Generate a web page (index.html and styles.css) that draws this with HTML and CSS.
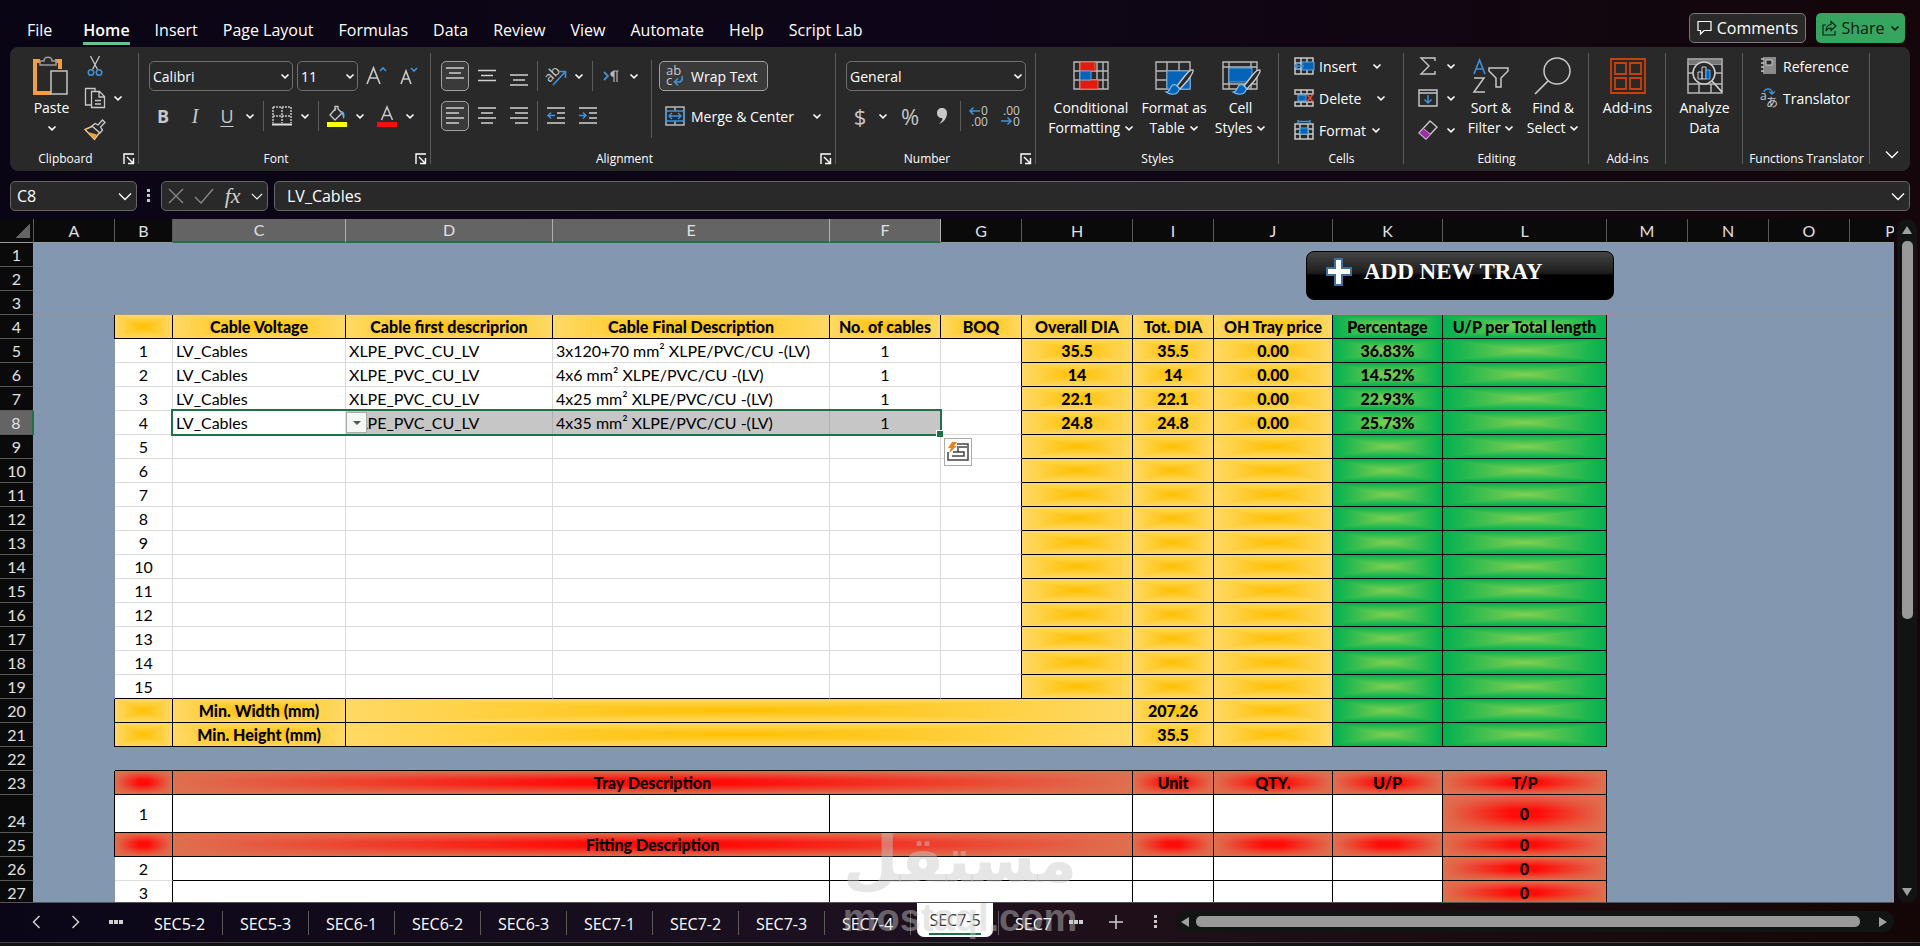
FILE: index.html
```html
<!DOCTYPE html>
<html lang="en">
<head>
  <meta charset="UTF-8">
  <meta name="viewport" content="width=device-width, initial-scale=1.0">
  <title>Cable Tray Sizing - SEC7-5</title>
  <link rel="stylesheet" href="styles.css">
</head>
<body>
  <!-- shared icons -->
  <svg class="sprite" aria-hidden="true">
    <symbol id="chev" viewBox="0 0 10 10"><path d="M1.5 3.5L5 6.8l3.5-3.3" fill="none" stroke="currentColor" stroke-width="1.6"/></symbol>
    <symbol id="chev-lg" viewBox="0 0 14 14"><path d="M1 4.5l6 6 6-6" fill="none" stroke="currentColor" stroke-width="1.3"/></symbol>
    <symbol id="launch" viewBox="0 0 12 12"><path d="M1 11V1h10M4 4l6 6M10.5 5v5.5H5" fill="none" stroke="currentColor" stroke-width="1.4"/></symbol>
    <symbol id="brush" viewBox="0 0 30 26"><path d="M29 1c-2-1-6 3-9 7l-7 9 3 3 8-9c3-4 6-8 5-10z" fill="#292929" stroke="#d0d0d0" stroke-width="1.3"/><path d="M12 16c-3-1-5 1-6 4-1 2-2 3-4 3 4 3 10 3 12 0 1-2 2-3 1-4z" fill="#0563b8" stroke="#7cc0f0" stroke-width="1.2"/></symbol>
  </svg>

  <header class="menu-bar">
    <nav class="menu">
      <a href="#" class="file">File</a>
      <a href="#" class="active">Home</a>
      <a href="#">Insert</a>
      <a href="#">Page Layout</a>
      <a href="#">Formulas</a>
      <a href="#">Data</a>
      <a href="#">Review</a>
      <a href="#">View</a>
      <a href="#">Automate</a>
      <a href="#">Help</a>
      <a href="#">Script Lab</a>
    </nav>
    <button type="button" class="btn-comments">
      <svg width="15" height="16" viewBox="0 0 15 16"><path d="M1 1.5h13v9H7l-3.5 3.5v-3.500H1z" fill="none" stroke="#fff" stroke-width="1.2"/></svg>
      Comments
    </button>
    <button type="button" class="btn-share">
      <svg width="15" height="16" viewBox="0 0 15 16"><path d="M4 5H1v10h12v-4M9 1.500l5 4.500-5 4.500V8C7 8 5 9 4 11c0-4 2-6.500 5-6.500z" fill="none" stroke="#06200f" stroke-width="1.1"/></svg>
      Share
      <svg width="10" height="10"><use href="#chev"/></svg>
    </button>
  </header>

  <section class="ribbon">
    <div class="group clipboard">
      <div class="group-body">
        <button type="button" class="big">
          <span class="pic"><svg width="36" height="40" viewBox="0 0 36 40"><path d="M7 5H2v32h16M22 5h5v8" fill="none" stroke="#f0a040" stroke-width="4"/><path d="M7 9V5h4c0-5 8-5 8 0h4v4z" fill="#292929" stroke="#9a9a9a" stroke-width="1.500"/><rect x="18" y="15" width="16" height="23" fill="#292929" stroke="#c4c4c4" stroke-width="1.500"/></svg></span>
          Paste<br>
          <svg width="10" height="10"><use href="#chev"/></svg>
        </button>
        <div class="stack">
          <div class="row"><button type="button" class="tool" aria-label="Cut"><svg width="20" height="22" viewBox="0 0 20 22"><path d="M5.500 1l7 13.500M14.500 1l-7 13.500" stroke="#c8c8c8" stroke-width="1.300"/><circle cx="6" cy="17.500" r="2.700" fill="none" stroke="#3f92d8" stroke-width="1.600"/><circle cx="14" cy="17.500" r="2.700" fill="none" stroke="#3f92d8" stroke-width="1.600"/></svg></button></div>
          <div class="row"><button type="button" class="tool" aria-label="Copy"><svg width="22" height="22" viewBox="0 0 22 22"><path d="M7 18H1.500V1.500H11V4M7.500 4.500h8l5 5v11h-13zM15 4.500V10h5.500M11 13.500h6M11 17h6" fill="none" stroke="#c8c8c8" stroke-width="1.300"/></svg></button><button type="button" class="drop" aria-label="Copy options"><svg width="10" height="10"><use href="#chev"/></svg></button></div>
          <div class="row"><button type="button" class="tool" aria-label="Format Painter"><svg width="22" height="22" viewBox="0 0 22 22"><path d="M9 7l-8 3.500 9.500 10L16 13" fill="none" stroke="#f3c98b" stroke-width="1.400"/><path d="M4 13l9 2.500-2.500 4.500z" fill="#f0a040"/><path d="M8 7l3-2.500 3 1.500 4.500-5 2.500 2.500-4.500 4.500 2 3-2.500 3z" fill="#292929" stroke="#d0d0d0" stroke-width="1.300"/></svg></button></div>
        </div>
      </div>
      <div class="group-name">Clipboard<button type="button" class="launcher" aria-label="Clipboard settings"><svg width="12" height="12"><use href="#launch"/></svg></button></div>
    </div>

    <div class="group font">
      <div class="group-body two-rows">
        <div class="row">
          <span class="pick font-name"><select aria-label="Font"><option>Calibri</option></select><svg width="10" height="10"><use href="#chev"/></svg></span>
          <span class="pick font-size"><select aria-label="Font size"><option>11</option></select><svg width="10" height="10"><use href="#chev"/></svg></span>
          <button type="button" class="tool" aria-label="Increase font size"><svg width="22" height="22" viewBox="0 0 22 22"><path d="M2 19L8.500 3 15 19M4.500 13h8" fill="none" stroke="#c8c8c8" stroke-width="1.600"/><path d="M15 6l3-3 3 3" fill="none" stroke="#3f92d8" stroke-width="1.600"/></svg></button>
          <button type="button" class="tool" aria-label="Decrease font size"><svg width="22" height="22" viewBox="0 0 22 22"><path d="M4 19L9 6l5 13M6 14h6.500" fill="none" stroke="#c8c8c8" stroke-width="1.600"/><path d="M14 3l3 3 3-3" fill="none" stroke="#3f92d8" stroke-width="1.600"/></svg></button>
        </div>
        <div class="row">
          <button type="button" class="tool bold">B</button>
          <button type="button" class="tool italic">I</button>
          <span class="split"><button type="button" class="tool underline">U</button><button type="button" class="drop" aria-label="Underline options"><svg width="10" height="10"><use href="#chev"/></svg></button></span>
          <i class="sep"></i>
          <span class="split"><button type="button" class="tool" aria-label="Borders"><svg width="20" height="20" viewBox="0 0 20 20"><path d="M1 1h18M1 10h18M1 1v16M10 1v16M19 1v16" stroke="#c8c8c8" stroke-width="1.500" stroke-dasharray="2 1"/><path d="M0 18.500h20" stroke="#e0e0e0" stroke-width="2"/></svg></button><button type="button" class="drop" aria-label="Border options"><svg width="10" height="10"><use href="#chev"/></svg></button></span>
          <i class="sep"></i>
          <span class="split"><button type="button" class="tool" aria-label="Fill color"><svg width="20" height="22" viewBox="0 0 20 22"><path d="M9 3L3 10l5 5 7-7-4-4V1.500H8V6" fill="none" stroke="#c8c8c8" stroke-width="1.300"/><path d="M14 6c4 0 4 5 3 8-2-2-1-5-3-5z" fill="#69b0e8"/><path d="M0 17h20v5H0z" fill="#ff0"/></svg></button><button type="button" class="drop" aria-label="Fill colors"><svg width="10" height="10"><use href="#chev"/></svg></button></span>
          <span class="split"><button type="button" class="tool" aria-label="Font color"><svg width="20" height="22" viewBox="0 0 20 22"><path d="M4.500 15L10 2l5.500 13M6.500 10.500h7" fill="none" stroke="#c8c8c8" stroke-width="1.500"/><path d="M0 17h20v5H0z" fill="#f01010"/></svg></button><button type="button" class="drop" aria-label="Font colors"><svg width="10" height="10"><use href="#chev"/></svg></button></span>
        </div>
      </div>
      <div class="group-name">Font<button type="button" class="launcher" aria-label="Font settings"><svg width="12" height="12"><use href="#launch"/></svg></button></div>
    </div>

    <div class="group alignment">
      <div class="group-body">
        <div class="two-rows">
          <div class="row">
            <button type="button" class="tool on" aria-label="Top align"><svg width="18" height="20" viewBox="0 0 18 20"><path d="M0 2h18M3 7h12M0 12h18" stroke="#d0d0d0" stroke-width="1.500"/></svg></button>
            <button type="button" class="tool" aria-label="Middle align"><svg width="18" height="20" viewBox="0 0 18 20"><path d="M0 4.500h18M3 9.500h12M0 14.500h18" stroke="#d0d0d0" stroke-width="1.500"/></svg></button>
            <button type="button" class="tool" aria-label="Bottom align"><svg width="18" height="20" viewBox="0 0 18 20"><path d="M0 9h18M3 14h12M0 19h18" stroke="#d0d0d0" stroke-width="1.500"/></svg></button>
            <i class="sep"></i>
            <span class="split"><button type="button" class="tool" aria-label="Orientation"><svg width="22" height="22" viewBox="0 0 22 22"><text x="0" y="15" transform="rotate(-45 6 11)" font-family="Open Sans" font-size="14" fill="#c8c8c8">ab</text><path d="M8 20L20 7M14 6.500h6.500V13" fill="none" stroke="#3f92d8" stroke-width="1.600"/></svg></button><button type="button" class="drop" aria-label="Orientation options"><svg width="10" height="10"><use href="#chev"/></svg></button></span>
            <i class="sep"></i>
            <span class="split"><button type="button" class="tool" aria-label="Text direction"><svg width="18" height="16" viewBox="0 0 18 16"><path d="M2 4l4 4-4 4" fill="none" stroke="#3f92d8" stroke-width="1.800"/><path d="M16.500 3H11M12 3v11M15 3v11" stroke="#b8b8b8" stroke-width="1.200"/><path d="M12 3c-5 0-5 6 0 6z" fill="#b8b8b8"/></svg></button><button type="button" class="drop" aria-label="Direction options"><svg width="10" height="10"><use href="#chev"/></svg></button></span>
          </div>
          <div class="row">
            <button type="button" class="tool on" aria-label="Align left"><svg width="18" height="18" viewBox="0 0 18 18"><path d="M0 1h18M0 6h13M0 11h18M0 16h13" stroke="#d0d0d0" stroke-width="1.500"/></svg></button>
            <button type="button" class="tool" aria-label="Center"><svg width="18" height="18" viewBox="0 0 18 18"><path d="M0 1h18M3 6h12M0 11h18M3 16h12" stroke="#d0d0d0" stroke-width="1.500"/></svg></button>
            <button type="button" class="tool" aria-label="Align right"><svg width="18" height="18" viewBox="0 0 18 18"><path d="M0 1h18M5 6h13M0 11h18M5 16h13" stroke="#d0d0d0" stroke-width="1.500"/></svg></button>
            <i class="sep"></i>
            <button type="button" class="tool" aria-label="Decrease indent"><svg width="18" height="18" viewBox="0 0 18 18"><path d="M0 1h18M10 6h8M10 11h8M0 16h18" stroke="#d0d0d0" stroke-width="1.500"/><path d="M8 8.500H1M4 5.500l-3 3 3 3" fill="none" stroke="#3f92d8" stroke-width="1.500"/></svg></button>
            <button type="button" class="tool" aria-label="Increase indent"><svg width="18" height="18" viewBox="0 0 18 18"><path d="M0 1h18M10 6h8M10 11h8M0 16h18" stroke="#d0d0d0" stroke-width="1.500"/><path d="M0 8.500h7M4 5.500l3 3-3 3" fill="none" stroke="#3f92d8" stroke-width="1.500"/></svg></button>
          </div>
        </div>
        <i class="sep tall"></i>
        <div class="two-rows">
          <div class="row">
            <button type="button" class="wide on"><svg width="20" height="22" viewBox="0 0 20 22"><text x="1" y="10" font-family="Open Sans" font-size="13" fill="#c8c8c8">ab</text><text x="1" y="20" font-family="Open Sans" font-size="13" fill="#c8c8c8">c</text><path d="M17 11c1 4-1 6-3 6h-4M13 13.500L9.500 17l3.500 3.500" fill="none" stroke="#3f92d8" stroke-width="1.600"/></svg>Wrap Text</button>
          </div>
          <div class="row">
            <button type="button" class="wide"><svg width="20" height="20" viewBox="0 0 20 20"><path d="M1 1h18v18H1zM10 1v4M10 15v4" fill="none" stroke="#b8b8b8" stroke-width="1.500"/><path d="M1 5h18v10H1zM4 10h12M7 7l-3 3 3 3M13 7l3 3-3 3" fill="none" stroke="#3f92d8" stroke-width="1.400"/></svg>Merge &amp; Center</button>
            <button type="button" class="drop" aria-label="Merge options"><svg width="10" height="10"><use href="#chev"/></svg></button>
          </div>
        </div>
      </div>
      <div class="group-name">Alignment<button type="button" class="launcher" aria-label="Alignment settings"><svg width="12" height="12"><use href="#launch"/></svg></button></div>
    </div>

    <div class="group number">
      <div class="group-body two-rows">
        <div class="row">
          <span class="pick number-format"><select aria-label="Number format"><option>General</option></select><svg width="10" height="10"><use href="#chev"/></svg></span>
        </div>
        <div class="row">
          <span class="split"><button type="button" class="tool sign">$</button><button type="button" class="drop" aria-label="Currency options"><svg width="10" height="10"><use href="#chev"/></svg></button></span>
          <button type="button" class="tool sign">%</button>
          <button type="button" class="tool" aria-label="Comma style"><svg width="12" height="18" viewBox="0 0 12 18"><path d="M6 1c3 0 5 2 5 5 0 5-3 9-8 11 3-3 4-5 3-6-3 0-5-2-5-5s2-5 5-5z" fill="#c8c8c8"/></svg></button>
          <i class="sep"></i>
          <button type="button" class="tool" aria-label="Increase decimal"><svg width="20" height="22" viewBox="0 0 20 22"><text x="12" y="10" font-family="Open Sans" font-size="12" fill="#c8c8c8">0</text><text x="2" y="21" font-family="Open Sans" font-size="12" fill="#c8c8c8">.00</text><path d="M11 6H1M4.500 2.500L1 6l3.500 3.500" fill="none" stroke="#3f92d8" stroke-width="1.500"/></svg></button>
          <button type="button" class="tool" aria-label="Decrease decimal"><svg width="20" height="22" viewBox="0 0 20 22"><text x="2" y="10" font-family="Open Sans" font-size="12" fill="#c8c8c8">.00</text><text x="12" y="21" font-family="Open Sans" font-size="12" fill="#c8c8c8">0</text><path d="M0 16h10M6.500 12.500L10 16l-3.500 3.500" fill="none" stroke="#3f92d8" stroke-width="1.500"/></svg></button>
        </div>
      </div>
      <div class="group-name">Number<button type="button" class="launcher" aria-label="Number settings"><svg width="12" height="12"><use href="#launch"/></svg></button></div>
    </div>

    <div class="group styles">
      <div class="group-body">
        <button type="button" class="big">
          <span class="pic"><svg width="36" height="30" viewBox="0 0 36 30"><path d="M1 1h34v27H1zM1 10h34M1 19h34M7 1v27M24 1v27M30 1v27" fill="none" stroke="#b8b8b8" stroke-width="1.400"/><path d="M7 1h15v9H7zM7 19h18v9H7z" fill="#e01b10" stroke="#f06a5a"/><path d="M7 10h11v9H7z" fill="#0563b8" stroke="#5aa8e0"/></svg></span>
          Conditional<br>Formatting <svg width="10" height="10"><use href="#chev"/></svg>
        </button>
        <button type="button" class="big">
          <span class="pic"><svg width="38" height="36" viewBox="0 0 38 36"><path d="M1 4h34v27H1zM1 13h34M1 22h34M12 4v27M24 4v27" fill="none" stroke="#b8b8b8" stroke-width="1.400"/><path d="M12 13h23v18H12z" fill="#0563b8" stroke="#5aa8e0"/><use href="#brush" x="9" y="11" width="30" height="26"/></svg></span>
          Format as<br>Table <svg width="10" height="10"><use href="#chev"/></svg>
        </button>
        <button type="button" class="big">
          <span class="pic"><svg width="38" height="36" viewBox="0 0 38 36"><path d="M1 4h34v27H1zM1 9h34M1 26h34M7 4v27M29 4v27" fill="none" stroke="#b8b8b8" stroke-width="1.400"/><path d="M7 10h23v14H7z" fill="#0563b8" stroke="#5aa8e0"/><use href="#brush" x="9" y="11" width="30" height="26"/></svg></span>
          Cell<br>Styles <svg width="10" height="10"><use href="#chev"/></svg>
        </button>
      </div>
      <div class="group-name">Styles</div>
    </div>

    <div class="group cells">
      <div class="group-body">
        <div class="stack">
          <button type="button" class="line"><svg width="20" height="18" viewBox="0 0 20 18"><path d="M1 1h18v16H1zM1 6h18M1 12h18M7 1v16M13 1v16" fill="none" stroke="#c8c8c8" stroke-width="1.500"/><path d="M8 5h12v8H8z" fill="#0563b8" stroke="#5aa8e0"/><path d="M10 9H1M5 5L1 9l4 4" fill="none" stroke="#3f92d8" stroke-width="1.600"/></svg><span>Insert</span><svg class="far" width="10" height="10"><use href="#chev"/></svg></button>
          <button type="button" class="line"><svg width="20" height="18" viewBox="0 0 20 18"><path d="M1 1h18v4H1zM1 13h18v4H1zM7 1v4M13 1v4M7 13v4M13 13v4" fill="none" stroke="#c8c8c8" stroke-width="1.500"/><path d="M4 6h8v6H4z" fill="#0563b8" stroke="#5aa8e0"/><path d="M13 5.500l6 7M19 5.500l-6 7" stroke="#e04b3a" stroke-width="1.600"/></svg><span>Delete</span><svg class="far" width="10" height="10"><use href="#chev"/></svg></button>
          <button type="button" class="line"><svg width="20" height="20" viewBox="0 0 20 20"><path d="M1 4h18v15H1zM1 9h18M1 14h18M6 4v15M14 4v15" fill="none" stroke="#c8c8c8" stroke-width="1.500"/><path d="M6 8h8v6H6z" fill="#0563b8" stroke="#5aa8e0"/><path d="M4 1.500h12M4 0v3M16 0v3" stroke="#3f92d8" stroke-width="1.500"/></svg><span>Format</span><svg width="10" height="10"><use href="#chev"/></svg></button>
        </div>
      </div>
      <div class="group-name">Cells</div>
    </div>

    <div class="group editing">
      <div class="group-body">
        <div class="stack">
          <span class="split"><button type="button" class="tool" aria-label="AutoSum"><svg width="18" height="20" viewBox="0 0 18 20"><path d="M16 5V2H2l8 8-8 8h14v-3" fill="none" stroke="#c8c8c8" stroke-width="1.400"/></svg></button><button type="button" class="drop" aria-label="Functions"><svg width="10" height="10"><use href="#chev"/></svg></button></span>
          <span class="split"><button type="button" class="tool" aria-label="Fill"><svg width="20" height="18" viewBox="0 0 20 18"><path d="M1 1h18v16H1zM1 4h18" fill="none" stroke="#c8c8c8" stroke-width="1.400"/><path d="M10 6v8M6.500 10.500L10 14l3.500-3.500" fill="none" stroke="#3f92d8" stroke-width="1.500"/></svg></button><button type="button" class="drop" aria-label="Fill options"><svg width="10" height="10"><use href="#chev"/></svg></button></span>
          <span class="split"><button type="button" class="tool" aria-label="Clear"><svg width="20" height="20" viewBox="0 0 20 20"><path d="M12 1l7 6-11 12-7-6z" fill="none" stroke="#c8c8c8" stroke-width="1.400"/><path d="M5.500 8.500l7 6L8 19l-7-6z" fill="#9b2fa5" stroke="#d9a0e0"/></svg></button><button type="button" class="drop" aria-label="Clear options"><svg width="10" height="10"><use href="#chev"/></svg></button></span>
        </div>
        <button type="button" class="big">
          <span class="pic"><svg width="38" height="36" viewBox="0 0 38 36"><path d="M2 16L7.500 2 13 16M4 11h7" fill="none" stroke="#3f92d8" stroke-width="1.600"/><path d="M2 20h10L2 34h11" fill="none" stroke="#c8c8c8" stroke-width="1.500"/><path d="M17 10h19v3l-7 7v9h-5v-9l-7-7z" fill="none" stroke="#c8c8c8" stroke-width="1.500"/></svg></span>
          Sort &amp;<br>Filter <svg width="10" height="10"><use href="#chev"/></svg>
        </button>
        <button type="button" class="big">
          <span class="pic"><svg width="38" height="38" viewBox="0 0 38 38"><circle cx="23" cy="14" r="13" fill="none" stroke="#c8c8c8" stroke-width="1.500"/><path d="M14 24L1 37" stroke="#c8c8c8" stroke-width="1.700"/></svg></span>
          Find &amp;<br>Select <svg width="10" height="10"><use href="#chev"/></svg>
        </button>
      </div>
      <div class="group-name">Editing</div>
    </div>

    <div class="group single">
      <div class="group-body">
        <button type="button" class="big">
          <span class="pic"><svg width="36" height="36" viewBox="0 0 36 36"><path d="M1 1h34v34H1zM5 5h11v11H5zM20 5h11v11H20zM5 20h11v11H5zM20 20h11v11H20z" fill="none" stroke="#c9420b" stroke-width="1.800"/></svg></span>
          Add-ins
        </button>
      </div>
      <div class="group-name">Add-ins</div>
    </div>

    <div class="group single">
      <div class="group-body">
        <button type="button" class="big">
          <span class="pic"><svg width="36" height="36" viewBox="0 0 36 36"><path d="M1 1h34v34H1zM1 6h34M1 15h34M1 26h34M12 26v9M24 26v9" fill="none" stroke="#b8b8b8" stroke-width="1.500"/><path d="M2 2h32v4H2z" fill="#777"/><circle cx="17" cy="15" r="11" fill="#292929" stroke="#d0d0d0" stroke-width="1.500"/><path d="M25 23l10 11" stroke="#d0d0d0" stroke-width="1.700"/><path d="M11 14h4v7h-4zM15 9h4v12h-4z" fill="none" stroke="#d0d0d0"/><path d="M19 12h4v9h-4z" fill="#0563b8" stroke="#5aa8e0"/></svg></span>
          Analyze<br>Data
        </button>
      </div>
    </div>

    <div class="group functions">
      <div class="group-body">
        <div class="stack">
          <button type="button" class="line"><svg width="18" height="20" viewBox="0 0 18 20"><path d="M3 1h13v17H3z" fill="#8a8a8a"/><path d="M6 4h6v5H6z" fill="#292929" stroke="#d0d0d0"/><path d="M1 3h3M1 7h3M1 11h3M1 15h3" stroke="#c8c8c8" stroke-width="1.500"/></svg><span>Reference</span></button>
          <button type="button" class="line"><svg width="18" height="20" viewBox="0 0 18 20"><text x="0" y="12" font-family="Open Sans" font-size="12" fill="#c8c8c8">a</text><text x="6" y="19" font-family="Noto Sans CJK JP" font-size="12" fill="#c8c8c8">あ</text><path d="M4 4c1-4 8-4 8 0v2M9 3.500L12 6l3-2.500" fill="none" stroke="#3f92d8" stroke-width="1.400"/></svg><span>Translator</span></button>
        </div>
      </div>
      <div class="group-name">Functions Translator</div>
    </div>

    <button type="button" class="collapse" aria-label="Collapse ribbon"><svg width="14" height="14"><use href="#chev-lg"/></svg></button>
  </section>

  <section class="formula-bar">
    <div class="field name-box"><input type="text" aria-label="Name box" value="C8"><svg width="14" height="14"><use href="#chev-lg"/></svg></div>
    <svg class="dots" width="4" height="14" viewBox="0 0 4 14"><path d="M0 0h3v3H0zM0 5h3v3H0zM0 10h3v3H0z" fill="#c8c8c8"/></svg>
    <div class="field fx-box">
      <svg width="16" height="16" viewBox="0 0 16 16"><path d="M1 1l14 14M15 1L1 15" stroke="#8a8a8a" stroke-width="1.300"/></svg>
      <svg width="20" height="16" viewBox="0 0 20 16"><path d="M1 9l6 6L19 1" fill="none" stroke="#8a8a8a" stroke-width="1.300"/></svg>
      <button type="button" class="fx">fx</button>
      <svg width="12" height="12"><use href="#chev-lg"/></svg>
    </div>
    <div class="field formula"><input type="text" aria-label="Formula" value="LV_Cables"><svg width="14" height="14"><use href="#chev-lg"/></svg></div>
  </section>

  <main class="workspace">
    <div class="sheet">
      <table class="grid">
        <colgroup>
          <col class="c-head"><col class="c-std"><col class="c-b"><col class="c-c"><col class="c-d"><col class="c-e"><col class="c-f"><col class="c-std"><col class="c-h"><col class="c-std"><col class="c-j"><col class="c-k"><col class="c-l"><col class="c-std"><col class="c-std"><col class="c-std"><col class="c-std">
        </colgroup>
        <thead>
          <tr><th class="corner"></th><th>A</th><th>B</th><th class="picked">C</th><th class="picked">D</th><th class="picked">E</th><th class="picked">F</th><th>G</th><th>H</th><th>I</th><th>J</th><th>K</th><th>L</th><th>M</th><th>N</th><th>O</th><th>P</th></tr>
        </thead>
        <tbody>
          <tr><th>1</th><td colspan="16"></td></tr>
          <tr><th>2</th><td colspan="16"></td></tr>
          <tr class="frozen"><th>3</th><td colspan="16"></td></tr>
          <tr><th>4</th><td class="edge"></td><td class="gold"></td><td class="gold">Cable Voltage</td><td class="gold">Cable first descriprion</td><td class="gold">Cable Final Description</td><td class="gold">No. of cables</td><td class="gold">BOQ</td><td class="gold">Overall DIA</td><td class="gold">Tot. DIA</td><td class="gold">OH Tray price</td><td class="green">Percentage</td><td class="green">U/P per Total length</td><td colspan="4"></td></tr>
          <tr class="cable"><th>5</th><td></td><td>1</td><td>LV_Cables</td><td>XLPE_PVC_CU_LV</td><td>3x120+70 mm² XLPE/PVC/CU -(LV)</td><td>1</td><td></td><td class="gold">35.5</td><td class="gold">35.5</td><td class="gold">0.00</td><td class="green">36.83%</td><td class="green"></td><td colspan="4"></td></tr>
          <tr class="cable"><th>6</th><td></td><td>2</td><td>LV_Cables</td><td>XLPE_PVC_CU_LV</td><td>4x6 mm² XLPE/PVC/CU -(LV)</td><td>1</td><td></td><td class="gold">14</td><td class="gold">14</td><td class="gold">0.00</td><td class="green">14.52%</td><td class="green"></td><td colspan="4"></td></tr>
          <tr class="cable"><th>7</th><td></td><td>3</td><td>LV_Cables</td><td>XLPE_PVC_CU_LV</td><td>4x25 mm² XLPE/PVC/CU -(LV)</td><td>1</td><td></td><td class="gold">22.1</td><td class="gold">22.1</td><td class="gold">0.00</td><td class="green">22.93%</td><td class="green"></td><td colspan="4"></td></tr>
          <tr class="cable"><th class="picked">8</th><td></td><td>4</td><td>LV_Cables</td><td class="sel">XLPE_PVC_CU_LV</td><td class="sel">4x35 mm² XLPE/PVC/CU -(LV)</td><td class="sel">1</td><td></td><td class="gold">24.8</td><td class="gold">24.8</td><td class="gold">0.00</td><td class="green">25.73%</td><td class="green"></td><td colspan="4"></td></tr>
          <tr class="cable"><th>9</th><td></td><td>5</td><td></td><td></td><td></td><td></td><td></td><td class="gold"></td><td class="gold"></td><td class="gold"></td><td class="green"></td><td class="green"></td><td colspan="4"></td></tr>
          <tr class="cable"><th>10</th><td></td><td>6</td><td></td><td></td><td></td><td></td><td></td><td class="gold"></td><td class="gold"></td><td class="gold"></td><td class="green"></td><td class="green"></td><td colspan="4"></td></tr>
          <tr class="cable"><th>11</th><td></td><td>7</td><td></td><td></td><td></td><td></td><td></td><td class="gold"></td><td class="gold"></td><td class="gold"></td><td class="green"></td><td class="green"></td><td colspan="4"></td></tr>
          <tr class="cable"><th>12</th><td></td><td>8</td><td></td><td></td><td></td><td></td><td></td><td class="gold"></td><td class="gold"></td><td class="gold"></td><td class="green"></td><td class="green"></td><td colspan="4"></td></tr>
          <tr class="cable"><th>13</th><td></td><td>9</td><td></td><td></td><td></td><td></td><td></td><td class="gold"></td><td class="gold"></td><td class="gold"></td><td class="green"></td><td class="green"></td><td colspan="4"></td></tr>
          <tr class="cable"><th>14</th><td></td><td>10</td><td></td><td></td><td></td><td></td><td></td><td class="gold"></td><td class="gold"></td><td class="gold"></td><td class="green"></td><td class="green"></td><td colspan="4"></td></tr>
          <tr class="cable"><th>15</th><td></td><td>11</td><td></td><td></td><td></td><td></td><td></td><td class="gold"></td><td class="gold"></td><td class="gold"></td><td class="green"></td><td class="green"></td><td colspan="4"></td></tr>
          <tr class="cable"><th>16</th><td></td><td>12</td><td></td><td></td><td></td><td></td><td></td><td class="gold"></td><td class="gold"></td><td class="gold"></td><td class="green"></td><td class="green"></td><td colspan="4"></td></tr>
          <tr class="cable"><th>17</th><td></td><td>13</td><td></td><td></td><td></td><td></td><td></td><td class="gold"></td><td class="gold"></td><td class="gold"></td><td class="green"></td><td class="green"></td><td colspan="4"></td></tr>
          <tr class="cable"><th>18</th><td></td><td>14</td><td></td><td></td><td></td><td></td><td></td><td class="gold"></td><td class="gold"></td><td class="gold"></td><td class="green"></td><td class="green"></td><td colspan="4"></td></tr>
          <tr class="cable last"><th>19</th><td></td><td>15</td><td></td><td></td><td></td><td></td><td></td><td class="gold"></td><td class="gold"></td><td class="gold"></td><td class="green"></td><td class="green"></td><td colspan="4"></td></tr>
          <tr><th>20</th><td class="edge"></td><td class="gold"></td><td class="gold">Min. Width (mm)</td><td class="gold" colspan="5"></td><td class="gold">207.26</td><td class="gold"></td><td class="green"></td><td class="green"></td><td colspan="4"></td></tr>
          <tr><th>21</th><td class="edge"></td><td class="gold"></td><td class="gold">Min. Height (mm)</td><td class="gold" colspan="5"></td><td class="gold">35.5</td><td class="gold"></td><td class="green"></td><td class="green"></td><td colspan="4"></td></tr>
          <tr><th>22</th><td></td><td colspan="11" class="above-tray"></td><td colspan="4"></td></tr>
          <tr><th>23</th><td class="edge"></td><td class="red"></td><td class="red" colspan="6">Tray Description</td><td class="red">Unit</td><td class="red">QTY.</td><td class="red">U/P</td><td class="red">T/P</td><td colspan="4"></td></tr>
          <tr class="tall-row"><th>24</th><td class="edge"></td><td class="item">1</td><td class="item" colspan="3"></td><td class="item" colspan="3"></td><td class="item"></td><td class="item"></td><td class="item"></td><td class="red">0</td><td colspan="4"></td></tr>
          <tr><th>25</th><td class="edge"></td><td class="red"></td><td class="red" colspan="6">Fitting Description</td><td class="red"></td><td class="red"></td><td class="red"></td><td class="red">0</td><td colspan="4"></td></tr>
          <tr><th>26</th><td></td><td class="item soft">2</td><td class="item" colspan="3"></td><td class="item" colspan="3"></td><td class="item"></td><td class="item"></td><td class="item"></td><td class="red">0</td><td colspan="4"></td></tr>
          <tr><th>27</th><td></td><td class="item soft">3</td><td class="item" colspan="3"></td><td class="item" colspan="3"></td><td class="item"></td><td class="item"></td><td class="item"></td><td class="red">0</td><td colspan="4"></td></tr>
        </tbody>
      </table>

      <div class="selection"></div>
      <button type="button" class="cell-drop" aria-label="Pick cable voltage"></button>
      <button type="button" class="quick" aria-label="Quick analysis"><svg width="22" height="20" viewBox="0 0 22 20"><path d="M10 2h11v16H1V10M10 5h10M11 6v4M6 10h11v4H5" fill="none" stroke="#444" stroke-width="1.500"/><path d="M5 0h5L7 4h3L2 11l2-5H1z" fill="#e8821a"/></svg></button>
      <button type="button" class="add-tray"><svg width="26" height="28" viewBox="0 0 26 28"><path d="M9 1h7v9h9v7h-9v10H9V17H1v-7h8z" fill="#fff" stroke="#3f6f9c" stroke-width="2"/></svg>ADD NEW TRAY</button>
    </div>
    <div class="v-scroll">
      <svg width="12" height="10" viewBox="0 0 12 10"><path d="M6 1l5 8H1z" fill="#a0a0a0"/></svg>
      <span class="thumb"></span>
      <svg width="12" height="10" viewBox="0 0 12 10"><path d="M6 9l5-8H1z" fill="#a0a0a0"/></svg>
    </div>
  </main>

  <footer class="tab-bar">
    <div class="tab-nav">
      <button type="button" aria-label="Previous sheet"><svg width="10" height="16" viewBox="0 0 10 16"><path d="M8.500 2l-6 6 6 6" fill="none" stroke="#d0d0d0" stroke-width="1.500"/></svg></button>
      <button type="button" aria-label="Next sheet"><svg width="10" height="16" viewBox="0 0 10 16"><path d="M1.500 2l6 6-6 6" fill="none" stroke="#d0d0d0" stroke-width="1.500"/></svg></button>
      <button type="button" aria-label="All sheets"><svg width="14" height="4" viewBox="0 0 14 4"><path d="M0 0h4v4H0zM5 0h4v4H5zM10 0h4v4h-4z" fill="#d0d0d0"/></svg></button>
    </div>
    <div class="tabs">
      <button type="button">SEC5-2</button>
      <button type="button">SEC5-3</button>
      <button type="button">SEC6-1</button>
      <button type="button">SEC6-2</button>
      <button type="button">SEC6-3</button>
      <button type="button">SEC7-1</button>
      <button type="button">SEC7-2</button>
      <button type="button">SEC7-3</button>
      <button type="button">SEC7-4</button>
      <button type="button" class="current"><span>SEC7-5</span></button>
      <button type="button" class="cut">SEC7</button>
    </div>
    <div class="tab-tools">
      <button type="button" aria-label="More sheets"><svg width="14" height="4" viewBox="0 0 14 4"><path d="M0 0h4v4H0zM5 0h4v4H5zM10 0h4v4h-4z" fill="#d0d0d0"/></svg></button>
      <button type="button" aria-label="New sheet"><svg width="14" height="14" viewBox="0 0 14 14"><path d="M7 0v14M0 7h14" stroke="#d0d0d0" stroke-width="1.500"/></svg></button>
      <button type="button" aria-label="Options"><svg width="4" height="14" viewBox="0 0 4 14"><path d="M0 0h3v3H0zM0 5h3v3H0zM0 10h3v3H0z" fill="#c8c8c8"/></svg></button>
    </div>
    <div class="h-scroll">
      <svg width="10" height="12" viewBox="0 0 10 12"><path d="M1 6l8-5v10z" fill="#a0a0a0"/></svg>
      <span class="thumb"></span>
      <svg width="10" height="12" viewBox="0 0 10 12"><path d="M9 6L1 1v10z" fill="#a0a0a0"/></svg>
    </div>
    <div class="watermark"><span class="ar" lang="ar">مستقل</span><span class="en">mostaql.com</span></div>
  </footer>
  <div class="status-bar"></div>
</body>
</html>
```

FILE: styles.css
```css
* {
  box-sizing: border-box;
}

body {
  margin: 0;
  height: 100vh;
  display: flex;
  flex-direction: column;
  overflow: hidden;
  background: linear-gradient(to right, #0a0514, #0e0618 50%, #14060a);
  color: #fff;
  font-family: "Open Sans", "Noto Sans", sans-serif;
  font-size: 16px;
}

.sprite {
  display: none;
}

button {
  margin: 0;
  padding: 0;
  border: none;
  background: none;
  color: inherit;
  font: inherit;
}

svg {
  flex: none;
  overflow: visible;
}

/* menu */
.menu-bar {
  display: flex;
  align-items: center;
  gap: 10px;
  height: 47px;
  padding: 9px 15px 0 27px;
}

.menu {
  display: flex;
  gap: 25px;
  flex: 1;
}

.menu a {
  color: #fff;
  text-decoration: none;
  line-height: 24px;
  padding-top: 6px;
}

.menu .file {
  margin-right: 6px;
}

.menu .active {
  font-weight: 600;
  border-bottom: 3px solid #6ac48a;
}

.btn-comments,
.btn-share {
  display: flex;
  align-items: center;
  justify-content: center;
  gap: 5px;
  height: 30px;
  border-radius: 5px;
}

.btn-comments {
  width: 117px;
  background: #292929;
  border: 1px solid #777;
}

.btn-share {
  width: 89px;
  background: #36a55f;
  color: #06200f;
}

/* ribbon */
.ribbon {
  display: flex;
  margin: 0 10px;
  height: 124px;
  background: #292929;
  border-radius: 8px;
  font-size: 14px;
}

.group {
  position: relative;
  display: flex;
  flex-direction: column;
  padding-top: 3px;
}

.group::after {
  content: "";
  position: absolute;
  right: 0;
  top: 6px;
  bottom: 7px;
  width: 1px;
  background: #5c5c5c;
}

.group-body {
  display: flex;
  align-items: flex-start;
  flex: 1;
  padding: 0 10px;
}

.group-name {
  position: relative;
  height: 25px;
  line-height: 25px;
  font-size: 12px;
  text-align: center;
  white-space: nowrap;
}

.clipboard .group-name,
.font .group-name,
.alignment .group-name,
.number .group-name {
  padding-right: 18px;
}

.launcher {
  position: absolute;
  right: 4px;
  bottom: 6px;
  line-height: 0;
}

.clipboard { width: 129px; }
.font { width: 292px; }
.alignment { width: 405px; }
.number { width: 200px; }
.styles { width: 243px; }
.cells { width: 125px; }
.editing { width: 185px; }
.single { width: 77px; }
.functions { width: 127px; }

.row {
  display: flex;
  align-items: center;
  gap: 4px;
}

.group-body.two-rows,
.two-rows {
  display: flex;
  flex-direction: column;
  gap: 10px;
  padding-top: 11px;
}

.two-rows .row {
  height: 30px;
}

.stack {
  display: flex;
  flex-direction: column;
}

.stack .row,
.stack .split {
  height: 32px;
  gap: 0;
}

.split {
  display: flex;
  align-items: center;
}

.tool {
  display: flex;
  align-items: center;
  justify-content: center;
  width: 28px;
  height: 30px;
  color: #c8c8c8;
}

.drop {
  display: flex;
  align-items: center;
  justify-content: center;
  width: 18px;
  height: 30px;
}

.on {
  background: #3a3a3a;
  outline: 1px solid #a0a0a0;
  outline-offset: -1px;
  border-radius: 5px;
}

.sep {
  width: 1px;
  height: 30px;
  background: #5c5c5c;
}

.sep.tall {
  height: 78px;
  margin: 10px 7px 0 8px;
}

.bold {
  font-size: 18px;
  font-weight: 700;
}

.italic {
  font-family: "Liberation Serif", serif;
  font-size: 20px;
  font-style: italic;
}

.underline {
  font-size: 18px;
  text-decoration: underline;
  text-underline-offset: 3px;
}

.sign {
  font-size: 22px;
}

.big {
  display: block;
  line-height: 20px;
  text-align: center;
  white-space: nowrap;
}

.big .pic {
  display: flex;
  align-items: center;
  justify-content: center;
  height: 48px;
  padding-top: 3px;
}

.clipboard .big {
  width: 61px;
  padding-left: 2px;
}

.clipboard .pic {
  padding-right: 2px;
}

.styles .big {
  width: 90px;
}

.styles .big + .big {
  width: 76px;
}

.styles .big + .big + .big {
  width: 57px;
}

.editing .big,
.single .big {
  flex: 1;
}

.editing .group-body {
  padding-right: 5px;
}

.single .group-body {
  padding: 0;
}

.wide {
  display: flex;
  align-items: center;
  gap: 6px;
  height: 30px;
  padding: 0 10px 0 6px;
  white-space: nowrap;
}

.line {
  display: flex;
  align-items: center;
  gap: 5px;
  height: 32px;
  padding-left: 5px;
}

.line .far {
  margin-left: 10px;
}

.functions .line {
  padding-left: 7px;
}

.collapse {
  align-self: flex-end;
  margin: 0 0 10px 15px;
  line-height: 0;
}

.pick {
  position: relative;
  display: block;
}

.pick select {
  appearance: none;
  width: 100%;
  height: 30px;
  padding: 0 3px;
  border: 1px solid #6e6e6e;
  border-radius: 5px;
  background: #292929;
  color: #fff;
  font: inherit;
}

.pick svg {
  position: absolute;
  right: 3px;
  top: 10px;
}

.font-name { width: 144px; }
.font-size { width: 61px; }
.number-format { width: 180px; }

/* formula bar */
.formula-bar {
  display: flex;
  align-items: center;
  gap: 6px;
  padding: 10px 10px 8px;
}

.field {
  display: flex;
  align-items: center;
  height: 30px;
  padding: 0 4px 0 6px;
  border: 1px solid #666;
  border-radius: 5px;
  background: #292929;
}

.field input {
  flex: 1;
  min-width: 0;
  padding: 0;
  border: none;
  background: none;
  color: #fff;
  font: inherit;
  outline: none;
}

.name-box {
  width: 127px;
}

.dots {
  margin: 0 4px;
}

.fx-box {
  width: 107px;
  justify-content: space-between;
}

.fx {
  color: #d0d0d0;
  font-family: "Liberation Serif", serif;
  font-size: 22px;
  font-style: italic;
  line-height: 24px;
}

.formula {
  flex: 1;
  padding-left: 12px;
}

/* sheet */
.workspace {
  display: flex;
  flex: 1;
  min-height: 0;
}

.sheet {
  position: relative;
  flex: 1;
  overflow: hidden;
  background: #8497b0;
  border-bottom: 1px solid #555;
}

.grid {
  width: 1931px;
  table-layout: fixed;
  border-collapse: separate;
  border-spacing: 0;
  color: #000;
  font-family: Lato, "Open Sans", sans-serif;
  font-size: 16px;
  line-height: 22px;
}

.c-head { width: 34px; }
.c-std { width: 81px; }
.c-b { width: 58px; }
.c-c { width: 173px; }
.c-d { width: 207px; }
.c-e { width: 277px; }
.c-f,
.c-h { width: 111px; }
.c-j { width: 119px; }
.c-k { width: 110px; }
.c-l { width: 164px; }

.grid th,
.grid td {
  height: 24px;
  padding: 1px 3px 0;
  overflow: hidden;
  white-space: nowrap;
}

.grid th {
  padding: 1px 0 0;
  background: #0a0a0a;
  color: #e0e0e0;
  font-weight: 400;
  border-right: 1px solid #5a5a5a;
  border-bottom: 1px solid #5a5a5a;
}

.grid thead th {
  border-bottom-color: #9a9a9a;
}

.grid tbody th {
  border-right-color: #9a9a9a;
  vertical-align: bottom;
}

.grid thead .picked {
  padding: 0;
  background: #646464;
  border-right-color: #b0b0b0;
  border-bottom: 2px solid #1f7246;
}

.grid tbody .picked {
  background: #646464;
  border-right: 2px solid #1f7246;
}

.grid .corner {
  background: linear-gradient(135deg, #0a0a0a 50%, #646464 50%) 15px 4px / 15px 15px no-repeat #0a0a0a;
}

.frozen td {
  border-bottom: 1px solid #969696;
}

.grid .edge {
  border-right: 1px solid #000;
}

.grid .gold,
.grid .green,
.grid .red,
.grid .item {
  border-right: 1px solid #000;
  border-bottom: 1px solid #000;
  text-align: center;
}

.grid .gold,
.grid .green,
.grid .red {
  font-weight: 900;
}

/* rectangular "from center" fills */
.gold {
  background-image: linear-gradient(to right, #ffd966, #ffc000, #ffd966), linear-gradient(#ffd966, #ffc000, #ffd966);
  background-blend-mode: lighten;
}

.green {
  background-image: linear-gradient(to right, #00b050, #83d050, #00b050), linear-gradient(#00b050, #83d050, #00b050);
  background-blend-mode: darken;
}

.red {
  background-image: linear-gradient(#de7050, #de705000 40%, #de705000 60%, #de7050), linear-gradient(to right, #de7050, #ff0c08 42%, #ff0c08 58%, #de7050);
}

.cable td:nth-child(n+3):nth-child(-n+8) {
  background: #fff;
  border-right: 1px solid #dcdcdc;
  border-bottom: 1px solid #dcdcdc;
}

.cable td:nth-child(3),
.cable td:nth-child(7) {
  text-align: center;
}

.cable td:nth-child(8) {
  border-right-color: #000 !important;
}

.cable.last td:nth-child(n+3):nth-child(-n+8) {
  border-bottom-color: #000;
}

.cable td.sel:nth-child(n+3):nth-child(-n+8) {
  background: #c6c6c6;
  border-right-color: #b0b0b0;
}

.above-tray {
  border-bottom: 1px solid #000;
}

.item {
  background: #fff;
}

.grid .soft {
  border-bottom-color: #dcdcdc;
}

.grid .tall-row td,
.grid .tall-row th {
  height: 38px;
}

.selection {
  position: absolute;
  left: 171px;
  top: 190px;
  width: 771px;
  height: 27px;
  border: 2px solid #1f7246;
}

.selection::after {
  content: "";
  position: absolute;
  right: -3px;
  bottom: -3px;
  width: 6px;
  height: 6px;
  background: #1f7246;
  border: solid #fff;
  border-width: 1px 0 0 1px;
}

.cell-drop {
  position: absolute;
  left: 346px;
  top: 193px;
  width: 21px;
  height: 21px;
  background: #f4f8f4;
  border: 1px solid #aaa;
}

.cell-drop::after {
  content: "";
  display: block;
  margin: 0 auto;
  width: 0;
  border: 4px solid transparent;
  border-top-color: #555;
  border-bottom: none;
}

.quick {
  position: absolute;
  left: 944px;
  top: 219px;
  width: 28px;
  height: 28px;
  background: #fff;
  border: 1px solid #ababab;
  line-height: 0;
}

.add-tray {
  position: absolute;
  left: 1306px;
  top: 32px;
  width: 308px;
  height: 49px;
  display: flex;
  align-items: flex-start;
  gap: 12px;
  padding: 6px 0 0 19px;
  border: 1px solid #000;
  border-radius: 8px;
  background: linear-gradient(#444, #1c1c1c 45%, #000 50%);
  font-family: "Liberation Serif", serif;
  font-size: 23px;
  font-weight: 700;
  line-height: 27px;
}

.v-scroll {
  display: flex;
  flex-direction: column;
  align-items: center;
  width: 20px;
  margin: 0 3px;
  padding: 6px 0;
  border-radius: 10px;
  background: #111413;
}

.v-scroll .thumb {
  width: 11px;
  height: 378px;
  margin: 6px 0 auto;
  border-radius: 5px;
  background: #999;
}

/* sheet tabs */
.tab-bar {
  position: relative;
  display: flex;
  height: 40px;
  border-bottom: 1px solid #444;
  background: linear-gradient(to right, #0a0618, #1d1120 45%, #1f0f18 60%, #140606);
}

.tab-nav {
  display: flex;
  padding-left: 16px;
  width: 137px;
}

.tab-nav button,
.tab-tools button {
  display: flex;
  align-items: center;
  justify-content: center;
  width: 40px;
  height: 38px;
}

.tabs {
  display: flex;
}

.tabs button {
  width: 86px;
  height: 24px;
  margin-top: 8px;
  padding-top: 1px;
  border-right: 1px solid #5a5a5a;
}

.tabs .current {
  width: 76px;
  height: 34px;
  margin: 0 5px 0 6px;
  border: none;
  border-radius: 0 0 7px 7px;
  background: #fff;
  color: #333;
}

.current span {
  display: inline-block;
  line-height: 26px;
  border-bottom: 2px solid #1f7246;
}

.tabs .cut {
  width: 58px;
  padding-left: 16px;
  border-left: 1px solid #5a5a5a;
  border-right: none;
  text-align: left;
}

.tab-tools {
  display: flex;
}

.h-scroll {
  display: flex;
  flex: 1;
  align-items: center;
  height: 21px;
  margin: 8px 26px 0 0;
  padding: 0 6px 0 4px;
  gap: 6px;
  border-radius: 10px;
  background: #111413;
}

.h-scroll .thumb {
  flex: 1;
  height: 11px;
  margin-right: 12px;
  border-radius: 5px;
  background: #999;
}

.watermark {
  position: absolute;
  left: 844px;
  bottom: 4px;
  width: 232px;
  display: flex;
  flex-direction: column;
  align-items: center;
  color: rgba(200, 200, 200, 0.45);
  font-weight: 700;
  pointer-events: none;
}

.watermark .ar {
  font-family: "DejaVu Sans", sans-serif;
  font-size: 64px;
  line-height: 76px;
}

.watermark .en {
  font-family: "Liberation Sans", sans-serif;
  font-size: 38px;
  line-height: 40px;
}

.status-bar {
  height: 3px;
  background: #131313;
}
```
